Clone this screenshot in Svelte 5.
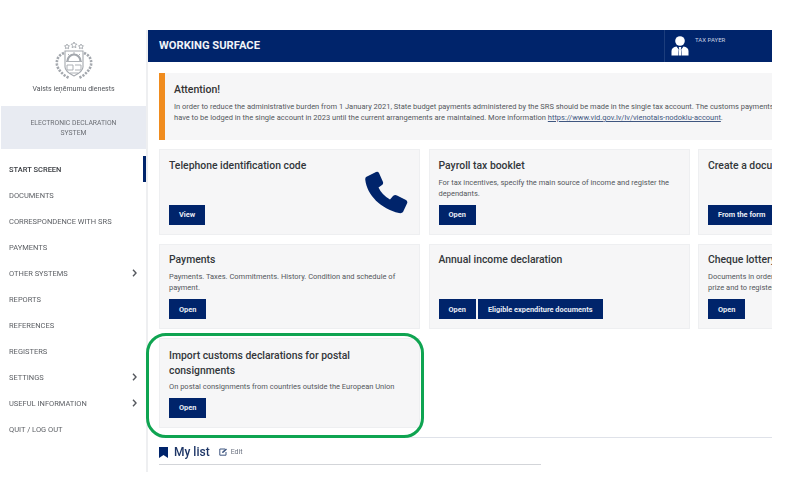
<script>
  const menu = [
    { label: 'START SCREEN', active: true },
    { label: 'DOCUMENTS' },
    { label: 'CORRESPONDENCE WITH SRS' },
    { label: 'PAYMENTS' },
    { label: 'OTHER SYSTEMS', more: true },
    { label: 'REPORTS' },
    { label: 'REFERENCES' },
    { label: 'REGISTERS' },
    { label: 'SETTINGS', more: true },
    { label: 'USEFUL INFORMATION', more: true },
    { label: 'QUIT / LOG OUT' }
  ];
  const rows = [
    [
      { title: 'Telephone identification code', text: '', buttons: ['View'], phone: true },
      { title: 'Payroll tax booklet', text: 'For tax incentives, specify the main source of income and register the dependants.', buttons: ['Open'] },
      { title: 'Create a document', text: '', buttons: ['From the form'] }
    ],
    [
      { title: 'Payments', text: 'Payments. Taxes. Commitments. History. Condition and schedule of payment.', buttons: ['Open'] },
      { title: 'Annual income declaration', text: '', buttons: ['Open', 'Eligible expenditure documents'] },
      { title: 'Cheque lottery', text: 'Documents in order to participate in the lottery\nprize and to register', buttons: ['Open'] }
    ]
  ];
  const wide = { title: 'Import customs declarations for postal consignments', text: 'On postal consignments from countries outside the European Union', buttons: ['Open'] };
</script>

{#snippet card(c, tall)}
  <article class="card" class:tall>
    <h3>{c.title}</h3>
    {#if c.text}<p>{c.text}</p>{/if}
    <div class="actions">
      {#each c.buttons as b}<button>{b}</button>{/each}
    </div>
    {#if c.phone}
      <svg class="phone" width="44" height="44" viewBox="0 0 44 44" fill="#00246b">
        <path d="M1 6 11 1Q13 .3 14 2L18 11Q18.500 13 17 14L13.500 16.500Q17 24 25 28.500L28 25Q30 23.500 32 24.500L41 29Q43 30.500 42 32.500L38 41Q37 42.500 34 42C16 38 2 24 .3 9Q0 7 1 6z" />
      </svg>
    {/if}
  </article>
{/snippet}

<div class="page">
  <aside class="side">
    <div class="brand">
      <svg class="crest" width="40" height="40" viewBox="0 0 40 40" fill="none" stroke="#a4a8ae" stroke-width=".9">
        <path d="M20 1l1 2 2 .2-1.500 1.500.4 2L20 5.700l-1.900 1 .4-2L17 3.200 19 3zM13 3l.8 1.600 1.700.2-1.200 1.200.3 1.700-1.600-.8-1.600.8.300-1.700L10.500 4.800l1.700-.2zM27 3l.8 1.600 1.700.2-1.200 1.200.3 1.700-1.600-.8-1.600.8.300-1.700-1.200-1.200 1.700-.2z" />
        <path d="M11 10h18v16c0 4-4 6.500-9 9-5-2.500-9-5-9-9z" stroke-width="1.100" />
        <path d="M13.500 20a6.500 6.500 0 0 1 13 0" stroke-width="2.200" />
        <path d="M12 20.500h16M13 24h6v5h-6zM21 24h6v5h-6M16 32h8" />
        <path d="M20 11v2M14 13l1.500 1.500M26 13l-1.500 1.500" />
        <path d="M10 12C5 14 2 18 3 24c1 5 6 10 12 13M30 12c5 2 8 6 7 12-1 5-6 10-12 13" stroke-dasharray="2.200 1.200" stroke-width="2.600" />
      </svg>
      <div class="brand-name">Valsts ieņēmumu dienests</div>
    </div>
    <div class="system">ELECTRONIC DECLARATION<br />SYSTEM</div>
    <nav class="menu">
      {#each menu as item}
        <div class="item" class:active={item.active}>
          <span>{item.label}</span>
          {#if item.more}
            <svg width="5" height="8" viewBox="0 0 5 8" fill="none" stroke="#55585e" stroke-width="1.4"><path d="M1 .8 4 4 1 7.200" /></svg>
          {/if}
        </div>
      {/each}
    </nav>
  </aside>

  <main class="main">
    <header class="top">
      <h1>WORKING SURFACE</h1>
      <div class="user">
        <svg viewBox="0 0 18 20" fill="#fff">
          <circle cx="9" cy="5" r="4.800" />
          <path d="M0.500 19.500v-4.500c0-2.600 2-4 5-4.500l2.300 3-.8 6zM17.500 19.500v-4.500c0-2.600-2-4-5-4.500l-2.300 3 .8 6z" />
          <path d="M8 11h2l.3 1-.5 1 .7 6.500h-3l.7-6.500-.5-1z" />
        </svg>
        <span>TAX PAYER</span>
      </div>
    </header>

    <div class="content">
      <section class="alert">
        <h2>Attention!</h2>
        <p>In order to reduce the administrative burden from 1 January 2021, State budget payments administered by the SRS should be made in the single tax account. The customs payments<br />have to be lodged in the single account in 2023 until the current arrangements are maintained. More information <a href="#top">https://www.vid.gov.lv/lv/vienotais-nodoklu-account</a>.</p>
      </section>

      {#each rows as row}
        <div class="row">
          {#each row as c}
            {@render card(c, false)}
          {/each}
        </div>
      {/each}
      <div class="row">
        {@render card(wide, true)}
      </div>

      <div class="rule"></div>

      <div class="list">
        <svg width="9" height="11" viewBox="0 0 9 11" fill="#00246b"><path d="M0 0h9v11L4.500 8 0 11z" /></svg>
        <strong>My list</strong>
        <svg class="pen" width="9" height="8" viewBox="0 0 9 8" fill="none" stroke="#3f5680" stroke-width="1"><path d="M6 1H.8v6.200H7V4" /><path d="M3 5l.4-1.500L7 .6l1 1L4.500 4.700z" fill="#3f5680" stroke="none" /></svg>
        <span>Edit</span>
      </div>

      <div class="highlight"></div>
    </div>
  </main>
</div>

<style>
  :global(body) {
    margin: 0;
    background: #fff;
  }
  .page {
    display: flex;
    width: 772px;
    height: 479px;
    padding-top: 30px;
    box-sizing: border-box;
    font-family: Roboto, "Liberation Sans", sans-serif;
    overflow: hidden;
    filter: blur(0.4px);
    will-change: opacity;
  }
  .side {
    flex: 0 0 146px;
    height: 442px;
    display: flex;
    flex-direction: column;
  }
  .brand {
    height: 76px;
    display: flex;
    flex-direction: column;
    align-items: center;
    padding-top: 11px;
    box-sizing: border-box;
    margin-left: 1px;
  }
  .crest {
    display: block;
  }
  .brand-name {
    margin-top: 4px;
    font-size: 7px;
    color: #53565b;
    white-space: nowrap;
  }
  .system {
    height: 43px;
    margin-left: 1px;
    background: #e8ebf2;
    color: #6b6e74;
    font-size: 6.800px;
    line-height: 10px;
    text-align: center;
    display: flex;
    align-items: center;
    justify-content: center;
  }
  .menu {
    margin-top: 7px;
  }
  .item {
    height: 26px;
    padding: 0 9px;
    display: flex;
    align-items: center;
    justify-content: space-between;
    font-size: 7.500px;
    color: #5c5f64;
    box-sizing: border-box;
  }
  .item.active {
    color: #3a3d42;
    font-weight: 500;
    border-right: 3px solid #00246b;
  }
  .main {
    position: relative;
    flex: 0 0 626px;
    min-width: 0;
    height: 442px;
    border-left: 2px solid #eeeff1;
    box-sizing: border-box;
  }
  .top {
    height: 32px;
    background: #00246b;
    color: #fff;
    display: flex;
    justify-content: space-between;
    align-items: stretch;
  }
  .top h1 {
    margin: 0;
    padding-left: 11px;
    font-size: 11.200px;
    font-weight: 700;
    line-height: 31px;
    color: #f0f3f8;
  }
  .user {
    flex: 0 0 108px;
    border-left: 1px solid #1c3d7c;
    box-sizing: border-box;
    display: flex;
    padding: 6px 0 0 6px;
    gap: 6px;
  }
  .user svg {
    width: 18px;
    height: 20px;
  }
  .user span {
    font-size: 6px;
    color: #c9d1e2;
    line-height: 7px;
  }
  .content {
    position: relative;
    padding: 11px 0 0 11px;
    width: 800px;
  }
  .alert {
    width: 613px;
    height: 67px;
    box-sizing: border-box;
    background: #f6f6f7;
    border-left: 6px solid #f08c1e;
    padding: 10px 0 0 9px;
    overflow: hidden;
    margin-bottom: 9px;
  }
  .alert h2 {
    margin: 0 0 5px;
    font-size: 10.500px;
    font-weight: 500;
    line-height: 13px;
    color: #333;
  }
  .alert p {
    margin: 0;
    width: 640px;
    font-size: 7.500px;
    line-height: 11px;
    color: #54575c;
    white-space: nowrap;
  }
  .alert a {
    color: #3f5680;
  }
  .row {
    display: flex;
    gap: 8.500px;
    width: 800px;
    margin-bottom: 9px;
  }
  .card {
    position: relative;
    flex: 0 0 261px;
    height: 85.500px;
    box-sizing: border-box;
    background: #f6f6f7;
    border: 1px solid #eeeff1;
    padding: 7.500px 0 0 9px;
  }
  .card.tall {
    height: 89.500px;
    padding-top: 9px;
  }
  .card h3 {
    margin: 0 0 4px;
    width: 220px;
    font-size: 10.400px;
    font-weight: 500;
    line-height: 15px;
    color: #33363a;
  }
  .card.tall h3 {
    margin-bottom: 3px;
  }
  .card p {
    margin: 0;
    width: 240px;
    font-size: 7.500px;
    line-height: 11px;
    color: #54575c;
    white-space: pre-line;
  }
  .actions {
    position: absolute;
    left: 9px;
    bottom: 9px;
    display: flex;
    gap: 2px;
  }
  button {
    height: 20px;
    padding: 0 10px;
    border: 0;
    background: #00246b;
    color: #e8ecf4;
    font: 700 7.400px Roboto, "Liberation Sans", sans-serif;
    white-space: nowrap;
  }
  .phone {
    position: absolute;
    left: 205px;
    top: 21px;
  }
  .rule {
    width: 613px;
    border-top: 1px solid #dfe2e9;
  }
  .list {
    width: 382px;
    height: 27px;
    padding-top: 3px;
    box-sizing: border-box;
    border-bottom: 1px solid #d3d5d9;
    display: flex;
    align-items: center;
  }
  .list strong {
    margin-left: 6px;
    font-size: 12px;
    font-weight: 500;
    color: #1d3566;
  }
  .pen {
    margin-left: 9px;
  }
  .list span {
    margin-left: 3px;
    font-size: 7px;
    color: #6b7280;
  }
  .highlight {
    position: absolute;
    left: -2px;
    top: 271px;
    width: 278px;
    height: 105px;
    box-sizing: border-box;
    border: 3px solid #0fa451;
    border-radius: 20px;
    pointer-events: none;
  }
</style>
